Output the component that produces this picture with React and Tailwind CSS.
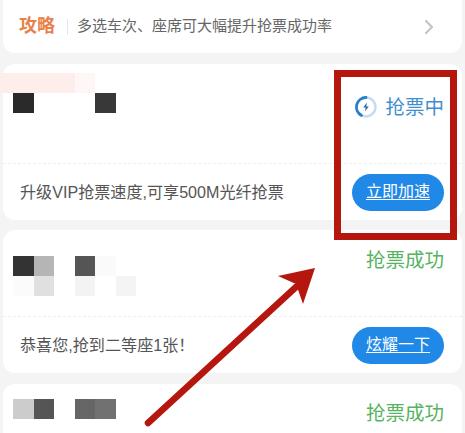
const font = { fontFamily: '"Liberation Sans", "Noto Sans CJK SC", sans-serif' };

function Cell({ c }) {
  return <div className="h-[20px] w-[20.5px]" style={{ backgroundColor: c }} />;
}

function Mosaic({ rows }) {
  return (
    <div className="flex flex-col">
      {rows.map((r, i) => (
        <div key={i} className="flex">
          {r.map((c, j) => (
            <Cell key={j} c={c} />
          ))}
        </div>
      ))}
    </div>
  );
}

function Action({ label }) {
  return (
    <button className="flex h-[37px] w-[92px] items-center justify-center rounded-full bg-[#2089e8] text-[16px] text-white underline underline-offset-2">
      {label}
    </button>
  );
}

function Footer({ text, label }) {
  return (
    <div className="flex h-[57px] items-center justify-between border-t border-dashed border-[#eeeeee] pl-[17px] pr-[18px]">
      <span className="text-[16.1px] text-[#555555]">{text}</span>
      <Action label={label} />
    </div>
  );
}

const T = '#ffffff';

export default function App() {
  return (
    <div className="relative h-[433px] w-[465px] overflow-hidden bg-[#f4f4f4]" style={font}>
      <div className="mx-[3px] flex h-[53px] items-center rounded-b-[12px] bg-white pl-[16px] pr-[28px]">
        <span className="text-[18px] font-bold text-[#e8814a]">攻略</span>
        <span className="ml-[12px] mr-[9px] h-[16px] w-px bg-[#e6e6e6]" />
        <span className="flex-1 text-[15px] text-[#666666]">多选车次、座席可大幅提升抢票成功率</span>
        <svg width="10" height="16" viewBox="0 0 10 16" fill="none" stroke="#c4c4c4" strokeWidth="2.2" strokeLinecap="round" strokeLinejoin="round">
          <path d="M2 2l6 6-6 6" />
        </svg>
      </div>

      <div className="mx-[3px] mt-[11px] rounded-[12px] bg-white">
        <div className="flex h-[99px] items-start justify-between pr-[18px]">
          <div className="pt-[9px]">
            <div className="-ml-[3px] flex h-[20px]">
              <div className="h-[20px] w-[75px] bg-[#fdeeec]" />
              <div className="h-[20px] w-[20px] bg-[#fef7f6]" />
            </div>
            <div className="pl-[10px]">
              <Mosaic rows={[['#2a2a2a', T, T, T, '#383838']]} />
            </div>
          </div>
          <div className="mt-[32px] flex h-[22px] items-center gap-[7px] text-[19.5px] leading-[22px] text-[#3f8fcf]">
            <svg width="24" height="24" viewBox="0 0 24 24" fill="none">
              <circle cx="12" cy="12" r="9.5" stroke="#c4dcf3" strokeWidth="2.4" />
              <path d="M12 2.5a9.5 9.5 0 0 0-4.5 17.9" stroke="#2a7fc9" strokeWidth="2.8" strokeLinecap="round" />
              <path d="M13 7.5 9.2 12.6h2.5l-.7 3.9 3.8-5.1h-2.5z" fill="#2a6aa8" />
            </svg>
            <span>抢票中</span>
          </div>
        </div>
        <Footer text="升级VIP抢票速度,可享500M光纤抢票" label="立即加速" />
      </div>

      <div className="mx-[3px] mt-[10px] rounded-[12px] bg-white">
        <div className="flex h-[86px] items-start justify-between pr-[18px]">
          <div className="pl-[10px] pt-[26px]">
            <Mosaic
              rows={[
                ['#333333', '#b5b5b5', T, '#555555', '#fafafa', T],
                ['#fbfbfb', '#e0e0e0', T, '#f3f3f3', T, '#f4f4f4'],
              ]}
            />
          </div>
          <div className="mt-[20px] flex h-[22px] items-center text-[19.5px] text-[#56b35f]">抢票成功</div>
        </div>
        <Footer text="恭喜您,抢到二等座1张！" label="炫耀一下" />
      </div>

      <div className="mx-[3px] mt-[11px] h-[60px] rounded-t-[12px] bg-white">
        <div className="flex items-start justify-between pr-[18px]">
          <div className="pl-[10px] pt-[15px]">
            <Mosaic rows={[['#cccccc', '#555555', T, '#666666', '#717171']]} />
          </div>
          <div className="mt-[19px] flex h-[22px] items-center text-[19.5px] text-[#56b35f]">抢票成功</div>
        </div>
      </div>

      <div className="absolute left-[334px] top-[70px] h-[170px] w-[123px] border-[7px] border-[#b5170f]" />
      <svg className="absolute left-0 top-0" width="465" height="433" viewBox="0 0 465 433" fill="none">
        <path d="M148 423 296 287" stroke="#b5170f" strokeWidth="6.5" strokeLinecap="round" />
        <path d="M315 268 278 276 296 284 303 304z" fill="#b5170f" />
      </svg>
    </div>
  );
}
